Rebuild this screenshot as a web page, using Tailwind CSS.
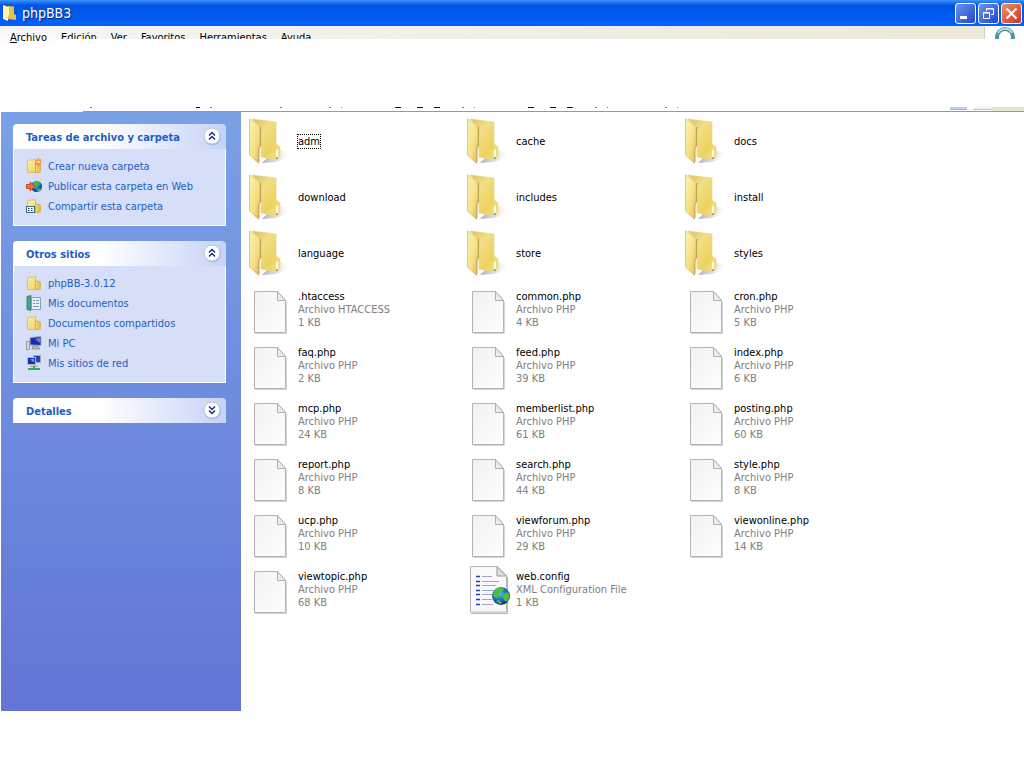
<!DOCTYPE html>
<html lang="es">
  <head>
    <meta charset="UTF-8" />
    <meta name="viewport" content="width=device-width, initial-scale=1.0" />
    <title>phpBB3</title>
    <script src="https://cdn.jsdelivr.net/npm/@tailwindcss/browser@4"></script>
  </head>
  <body class="bg-white min-h-screen font-['DejaVu_Sans_Condensed','DejaVu_Sans',sans-serif] text-[11px] leading-[13px] text-black">
    <!-- shared icons -->
    <svg class="absolute h-0 w-0">
      <defs>
        <linearGradient id="gFront" x1="0" y1="0" x2="1" y2="1">
          <stop offset="0" stop-color="#fdf3b4" />
          <stop offset="0.6" stop-color="#f5df80" />
          <stop offset="1" stop-color="#dfb248" />
        </linearGradient>
        <linearGradient id="gBack" x1="0" y1="0" x2="1" y2="1">
          <stop offset="0" stop-color="#d9bd5c" />
          <stop offset="0.35" stop-color="#f1df86" />
          <stop offset="0.7" stop-color="#ecd25f" />
          <stop offset="1" stop-color="#f4e596" />
        </linearGradient>
        <linearGradient id="gShadow" x1="0" y1="0" x2="1" y2="0">
          <stop offset="0" stop-color="#8a8a8a" stop-opacity="0.7" />
          <stop offset="1" stop-color="#bbbbbb" stop-opacity="0" />
        </linearGradient>
        <linearGradient id="gPage" x1="0" y1="0" x2="1" y2="1">
          <stop offset="0" stop-color="#f2f2f2" />
          <stop offset="1" stop-color="#fdfdfd" />
        </linearGradient>
        <radialGradient id="gGlobe" cx="0.4" cy="0.35" r="0.7">
          <stop offset="0" stop-color="#6fc4f5" />
          <stop offset="0.5" stop-color="#1f6fd0" />
          <stop offset="1" stop-color="#0b2a78" />
        </radialGradient>
        <linearGradient id="gSmall" x1="0" y1="0" x2="1" y2="1">
          <stop offset="0" stop-color="#fdf2a8" />
          <stop offset="1" stop-color="#eccb55" />
        </linearGradient>
      </defs>
      <symbol id="folder" viewBox="0 0 48 52">
        <path d="M31 34 L44 38 Q42 44 31 47 L17 48 Z" fill="url(#gShadow)" />
        <path d="M7 4 L31 7 V29 L35 32 V41 L32 45 L16 42 V12 Z" fill="url(#gBack)" stroke="#e6d183" stroke-width="0.6" />
        <path d="M31 36 L33 33 V43 L31 44 Z" fill="#fffbe4" />
        <path d="M31 42 h2 v2 h-2 z" fill="#8fa99a" />
        <path d="M4.500 4 L15 11 V31 L13.500 33 V48.500 L4.500 40 Z" fill="url(#gFront)" stroke="#d8bd66" stroke-width="0.8" />
        <path d="M15.500 12 V31 L14 33 V47" fill="none" stroke="#b99a48" stroke-width="0.9" />
      </symbol>
      <symbol id="page" viewBox="0 0 48 52">
        <path d="M10 50.500 H41.500 V19" fill="none" stroke="#d4d4d4" />
        <path d="M9.500 8.500 H32.500 L40.500 17.500 V49.500 H9.500 Z" fill="url(#gPage)" stroke="#b3b3b3" />
        <path d="M32.500 8.500 V17.500 H40.500 Z" fill="#ececec" stroke="#a9a9a9" stroke-width="0.9" />
      </symbol>
      <symbol id="config" viewBox="0 0 48 52">
        <path d="M8 50.500 H44.500 V14" fill="none" stroke="#b5b5b5" />
        <path d="M7.500 3.500 H34 L43.500 13 V49 H7.500 Z" fill="#f9f9fb" stroke="#b4b4b4" />
        <path d="M34 3.500 V13 H43.500 Z" fill="#dedede" stroke="#9a9a9a" />
        <path d="M13 13.500h4M13 18.500h4M13 22.500h4M13 27.500h4M13 31.500h4M13 36.500h4M13 41.500h4" stroke="#1e3fa8" stroke-width="1.400" />
        <path d="M19 13.500h10M19 18.500h17M19 22.500h14M19 27.500h14M19 31.500h11M19 36.500h10M19 41.500h11" stroke="#9ba6c2" />
        <circle cx="38" cy="33" r="9" fill="url(#gGlobe)" />
        <path d="M31 28q3-4 8-4l2 3-4 2-1 5-3 1-3-2zM40 31l5-2 2 5-3 5-3-2-2-3zM33 38l3-1 3 3-2 1z" fill="#4fbf3a" />
      </symbol>
      <symbol id="small-folder" viewBox="0 0 16 16">
        <path d="M1.500 2.500 L9.500 1.500 V5.500 L14.500 7 V14.500 L1.500 14.500 Z" fill="url(#gSmall)" stroke="#d8b850" stroke-width="0.8" />
        <path d="M9.500 5 V14.500 M10.500 14.500 Q14.500 14 14 7.500 L12 6.500 V11" fill="none" stroke="#c9a63e" stroke-width="0.8" />
      </symbol>
      <symbol id="new-folder" viewBox="0 0 16 16">
        <use href="#small-folder" />
        <path d="M12.500 0v8M8.500 4h8M10 1.500l5 5M15 1.500l-5 5" stroke="#f08a28" stroke-width="1.200" />
        <circle cx="12.500" cy="4" r="1.300" fill="#fff2a0" />
      </symbol>
      <symbol id="publish" viewBox="0 0 16 16">
        <circle cx="10.500" cy="8.500" r="5.500" fill="url(#gGlobe)" />
        <path d="M8 4.500q3-2 5-1l1 3-3 1-1 3-2-1zM11 11l4-1-1 3-3 1z" fill="#45b84a" />
        <path d="M0.500 6.500H4V4l5 4.500L4 13v-2.500H0.500z" fill="#f0703a" stroke="#b43c18" stroke-width="0.800" />
      </symbol>
      <symbol id="share" viewBox="0 0 16 16">
        <use href="#small-folder" />
        <rect x="0.500" y="8.500" width="8" height="6" fill="#eef4f4" stroke="#3f6f78" />
        <path d="M2 10.500h1.500M5 10.500h1.500M2 12.500h1.500M5 12.500h1.500" stroke="#1f5a60" stroke-width="1.200" />
      </symbol>
      <symbol id="documents" viewBox="0 0 16 16">
        <path d="M1 1.500L5 0.500V15.500L1 14.500Z" fill="#4fa58c" stroke="#2c7765" stroke-width="0.800" />
        <path d="M5.500 2.500H14.500V14.500H5.500Z" fill="#e7f1f5" stroke="#7fa5b0" />
        <path d="M7 5.500h2M7 8.500h2M7 11.500h6M10 5.500h3M10 8.500h3" stroke="#7b97b3" />
      </symbol>
      <symbol id="computer" viewBox="0 0 16 16">
        <path d="M0.500 6.500h3v8h-3z" fill="#d9dad2" stroke="#85877f" stroke-width="0.800" />
        <path d="M4 2.500L15 1.500V10.500L4 10z" fill="#1a2fa6" stroke="#a9afc4" />
        <path d="M9 4l5-1v5z" fill="#5c86e8" />
        <path d="M7 11h5l2 3H6z" fill="#b9bbb0" stroke="#77796f" stroke-width="0.600" />
      </symbol>
      <symbol id="network" viewBox="0 0 16 16">
        <path d="M7.500 0.500h7v7h-7z" fill="#2447b8" stroke="#9aa6c8" />
        <path d="M1.500 2.500h8v7h-8z" fill="#1a2fa6" stroke="#b4bcd2" />
        <path d="M4 4.500l4-1v4z" fill="#6f96f0" />
        <path d="M4 10.500h8l-1 1.500H4z" fill="#a9aca0" />
        <path d="M7 11h2v2h5v2H2v-2h5z" fill="#2fae56" />
      </symbol>
      <symbol id="chevrons-up" viewBox="0 0 20 20">
        <circle cx="10.500" cy="11" r="8.500" fill="#8d9bcb" opacity="0.500" />
        <circle cx="10" cy="10" r="8" fill="#ffffff" stroke="#b7c3e4" />
        <path d="M7 9.500l3-3 3 3M7 13.500l3-3 3 3" fill="none" stroke="#1d3278" stroke-width="1.500" />
      </symbol>
      <symbol id="chevrons-down" viewBox="0 0 20 20">
        <circle cx="10.500" cy="11" r="8.500" fill="#8d9bcb" opacity="0.500" />
        <circle cx="10" cy="10" r="8" fill="#ffffff" stroke="#b7c3e4" />
        <path d="M7 6.500l3 3 3-3M7 10.500l3 3 3-3" fill="none" stroke="#1d3278" stroke-width="1.500" />
      </symbol>
    </svg>

    <header class="flex h-[26px] items-center bg-linear-to-b from-[#3b93fb] via-[#0054e3] via-20% to-[#0061fc] pl-[3px] pr-0.5">
      <svg class="mr-[3px] h-4 w-4" viewBox="0 0 16 16">
        <path d="M5 1L11 1.500V9l2 1v5l-8-1z" fill="#e3c14e" />
        <path d="M0 0l6 2v8l-1 1v5l-5-2z" fill="#fdf3b4" />
      </svg>
      <h1 class="flex-1 text-sm leading-4 text-white [text-shadow:1px_1px_1px_#0a2a80]">phpBB3</h1>
      <div class="flex gap-0.5">
        <button aria-label="Minimizar" class="h-[21px] w-[21px] rounded-[3px] border border-white bg-linear-to-br from-[#6f92ee] to-[#1f45cc]">
          <svg class="h-[19px] w-[19px]" viewBox="0 0 19 19"><path d="M4 12h7v3H4z" fill="#fff" /></svg>
        </button>
        <button aria-label="Restaurar" class="h-[21px] w-[21px] rounded-[3px] border border-white bg-linear-to-br from-[#6f92ee] to-[#1f45cc]">
          <svg class="h-[19px] w-[19px]" viewBox="0 0 19 19"><path d="M7.500 7V4.500h7v6H12M7 5h8M4.500 8.500h6v6h-6zM4 9h7" fill="none" stroke="#fff" /></svg>
        </button>
        <button aria-label="Cerrar" class="h-[21px] w-[21px] rounded-[3px] border border-white bg-linear-to-br from-[#ef8a6c] to-[#cc3310]">
          <svg class="h-[19px] w-[19px]" viewBox="0 0 19 19"><path d="M4.500 4.500l10 10M14.500 4.500l-10 10" stroke="#fff" stroke-width="2.200" /></svg>
        </button>
      </div>
    </header>

    <div class="flex h-[81px] items-start">
      <a href="#" class="h-[18px] w-[60px] bg-linear-to-b from-[#f3f3f1] to-white pl-[10px] pt-[5px]"><span class="underline">A</span>rchivo</a>
      <nav class="flex h-[13px] flex-1 gap-[14px] overflow-hidden border-r border-[#d3cfbd] bg-linear-to-r from-[#f4f4f3] to-[#ece9d8] pl-px pt-[5px]">
        <a href="#">Edición</a>
        <a href="#">Ver</a>
        <a href="#">Favoritos</a>
        <a href="#">Herramientas</a>
        <a href="#">Ayuda</a>
      </nav>
      <svg class="h-[13px] w-[39px]" viewBox="0 0 39 13">
        <circle cx="20" cy="11" r="8" fill="none" stroke="#4f93a3" stroke-width="4" />
        <path d="M13 7a8 8 0 0 1 14 0" fill="none" stroke="#b5dbe6" stroke-width="2" />
      </svg>
    </div>

    <!-- address bar, cut off above its lower edge -->
    <div class="ml-[83px] flex h-[5px] items-start border-b border-[#7f9db9]">
      <svg class="h-1 w-[600px]" viewBox="0 0 600 4">
        <path d="M113 .500h4M312 .500h6M334 .500h6M351 .500h6M445 .500h6M467 .500h6M484 .500h6" stroke="#111" />
        <path d="M7 .500h2M127 .500h2M197 .500h2M246 .500h2M258 .500h1M379 .500h2M391 .500h1M512 .500h2M524 .500h1M582 .500h2M594 .500h1" stroke="#777" />
      </svg>
      <div class="ml-auto mr-1.5 h-[3px] w-[17px] border-b border-[#9db4e6] bg-[#b9cdf5]"></div>
      <div class="h-[3px] w-[19px] border-b border-[#c9c6b8] bg-[#f3f2ec]"></div>
      <div class="h-1 w-8 bg-[#e6e2d0]"></div>
    </div>

    <div class="flex">
      <aside class="ml-px flex min-h-[599px] w-60 flex-col gap-[15px] bg-linear-to-b from-[#7aa1e6] to-[#6375d6] pl-3 pr-[15px] pt-3 text-[#215dc6]">
        <section>
          <h2>
            <button class="flex h-[25px] w-full items-center justify-between rounded-t-[4px] bg-linear-to-r from-white from-40% to-[#c6d3f7] pl-[13px] pr-1 pt-0.5 font-bold">
              Tareas de archivo y carpeta
              <svg class="-mt-1 h-5 w-5"><use href="#chevrons-up" /></svg>
            </button>
          </h2>
          <ul class="flex flex-col gap-1 border border-t-0 border-white bg-[#d6dff7] px-3 pb-[11px] pt-[9px]">
            <li><a href="#" class="flex h-4 items-center gap-1.5"><svg class="h-4 w-4"><use href="#new-folder" /></svg>Crear nueva carpeta</a></li>
            <li><a href="#" class="flex h-4 items-center gap-1.5"><svg class="h-4 w-4"><use href="#publish" /></svg>Publicar esta carpeta en Web</a></li>
            <li><a href="#" class="flex h-4 items-center gap-1.5"><svg class="h-4 w-4"><use href="#share" /></svg>Compartir esta carpeta</a></li>
          </ul>
        </section>
        <section>
          <h2>
            <button class="flex h-[25px] w-full items-center justify-between rounded-t-[4px] bg-linear-to-r from-white from-40% to-[#c6d3f7] pl-[13px] pr-1 pt-0.5 font-bold">
              Otros sitios
              <svg class="-mt-1 h-5 w-5"><use href="#chevrons-up" /></svg>
            </button>
          </h2>
          <ul class="flex flex-col gap-1 border border-t-0 border-white bg-[#d6dff7] px-3 pb-[11px] pt-[9px]">
            <li><a href="#" class="flex h-4 items-center gap-1.5"><svg class="h-4 w-4"><use href="#small-folder" /></svg>phpBB-3.0.12</a></li>
            <li><a href="#" class="flex h-4 items-center gap-1.5"><svg class="h-4 w-4"><use href="#documents" /></svg>Mis documentos</a></li>
            <li><a href="#" class="flex h-4 items-center gap-1.5"><svg class="h-4 w-4"><use href="#small-folder" /></svg>Documentos compartidos</a></li>
            <li><a href="#" class="flex h-4 items-center gap-1.5"><svg class="h-4 w-4"><use href="#computer" /></svg>Mi PC</a></li>
            <li><a href="#" class="flex h-4 items-center gap-1.5"><svg class="h-4 w-4"><use href="#network" /></svg>Mis sitios de red</a></li>
          </ul>
        </section>
        <section>
          <h2>
            <button class="flex h-[25px] w-full items-center justify-between rounded-t-[4px] bg-linear-to-r from-white from-40% to-[#c6d3f7] pl-[13px] pr-1 pt-0.5 font-bold">
              Detalles
              <svg class="-mt-1 h-5 w-5"><use href="#chevrons-down" /></svg>
            </button>
          </h2>
        </section>
      </aside>

      <main class="flex-1 pl-1 pt-px">
        <ul id="fileList" class="grid grid-cols-[repeat(auto-fill,218px)]"></ul>
      </main>
    </div>

    <script>
      const folders = ["adm", "cache", "docs", "download", "includes", "install", "language", "store", "styles"];
      const files = [
        [".htaccess", "Archivo HTACCESS", 1],
        ["common.php", "Archivo PHP", 4],
        ["cron.php", "Archivo PHP", 5],
        ["faq.php", "Archivo PHP", 2],
        ["feed.php", "Archivo PHP", 39],
        ["index.php", "Archivo PHP", 6],
        ["mcp.php", "Archivo PHP", 24],
        ["memberlist.php", "Archivo PHP", 61],
        ["posting.php", "Archivo PHP", 60],
        ["report.php", "Archivo PHP", 8],
        ["search.php", "Archivo PHP", 44],
        ["style.php", "Archivo PHP", 8],
        ["ucp.php", "Archivo PHP", 10],
        ["viewforum.php", "Archivo PHP", 29],
        ["viewonline.php", "Archivo PHP", 14],
        ["viewtopic.php", "Archivo PHP", 68],
        ["web.config", "XML Configuration File", 1],
      ];

      const fileList = document.getElementById("fileList");

      function addItem(icon, content) {
        const item = document.createElement("li");
        item.innerHTML = `
          <a href="#" class="flex h-14 items-center gap-[5px]">
            <svg class="h-[52px] w-12 shrink-0"><use href="#${icon}" /></svg>
            ${content}
          </a>
        `;
        fileList.appendChild(item);
      }

      folders.forEach((name, index) => {
        const focus = index === 0 ? "outline-1 outline-dotted outline-black" : "";
        addItem("folder", `<span class="${focus}">${name}</span>`);
      });

      files.forEach(([name, type, size]) => {
        const icon = name === "web.config" ? "config" : "page";
        addItem(icon, `<span>${name}<span class="block text-[#808080]">${type}<br />${size} KB</span></span>`);
      });
    </script>
  </body>
</html>
